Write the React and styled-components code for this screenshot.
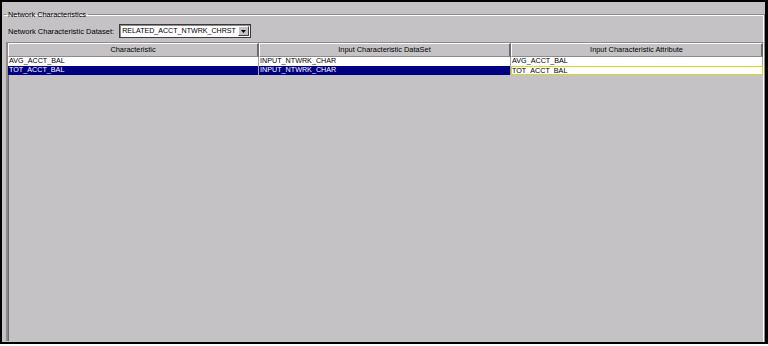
import React from "react";
import styled, { createGlobalStyle } from "styled-components";

const Global = createGlobalStyle`
  html, body { margin: 0; padding: 0; background: #ffffff; }
  body { font-family: "Liberation Sans", Arial, sans-serif; }
  * { box-sizing: border-box; }
`;

const Screen = styled.div`
  width: 768px;
  height: 346px;
  background: #ffffff;
  overflow: hidden;
`;

const Window = styled.div`
  width: 768px;
  height: 344px;
  background: #c4c2c4;
  border-top: 2px solid #000;
  border-left: 2px solid #000;
  border-right: 3px solid #000;
  border-bottom: 2px solid #000;
  padding: 2px 1px 0 2px;
  display: flex;
  flex-direction: column;
`;

const Group = styled.fieldset`
  flex: 1;
  margin: 0;
  padding: 0 0 1px 2px;
  border: none;
  border-top: 1px solid #8c8a8c;
  border-right: 1px solid #8c8a8c;
  box-shadow: inset 0 1px 0 #ffffff, inset -1px 0 0 #ffffff;
  display: flex;
  flex-direction: column;
  min-height: 0;
  margin-top: 6px;
`;

const Legend = styled.legend`
  font-size: 7.4px;
  line-height: 9px;
  color: #000;
  padding: 0 2px 0 2px;
  margin-left: 0;
`;

const DatasetRow = styled.div`
  display: flex;
  align-items: center;
  gap: 5px;
  height: 14px;
  margin-top: 5px;
  padding-left: 2px;
`;

const Label = styled.span`
  font-size: 7.55px;
  color: #000;
  white-space: nowrap;
`;

const Combo = styled.div`
  width: 132px;
  height: 14px;
  background: #ffffff;
  border: 1px solid #3a3a3a;
  box-shadow: inset 1px 1px 0 #8c8a8c;
  display: flex;
  align-items: center;
  justify-content: space-between;
  padding: 0 1px 0 2px;
`;

const ComboText = styled.span`
  font-size: 7.1px;
  color: #000;
  white-space: nowrap;
`;

const ComboButton = styled.div`
  width: 11px;
  height: 10px;
  background: #c4c2c4;
  border-top: 1px solid #ffffff;
  border-left: 1px solid #ffffff;
  border-right: 1px solid #404040;
  border-bottom: 1px solid #404040;
  display: flex;
  align-items: center;
  justify-content: center;
`;

const ScrollPane = styled.div`
  flex: 1;
  margin-top: 4px;
  border-left: 2px solid #8c8a8c;
  border-top: 1px solid #8c8a8c;
  border-right: 1px solid #ffffff;
  box-shadow: inset 1px 0 0 #6c6a6c;
  background: #c4c2c4;
  display: flex;
  flex-direction: column;
`;

const Grid = styled.div`
  display: grid;
  grid-template-columns: 251px 252px 252px;
`;

const HeaderCell = styled.div`
  height: 14px;
  font-size: 7.4px;
  line-height: 12px;
  text-align: center;
  color: #000;
  background: #c4c2c4;
  border-top: 1px solid #ffffff;
  border-left: 1px solid #ffffff;
  border-right: 2px solid #6c6a6c;
  border-bottom: 1px solid #8c8a8c;
  white-space: nowrap;
`;

const Cell = styled.div`
  height: 9px;
  font-size: 7.2px;
  padding-left: ${(p) => (p.$focused ? "0px" : "1px")};
  white-space: nowrap;
  overflow: hidden;
  color: ${(p) => (p.$selected && !p.$focused ? "#ffffff" : "#000000")};
  background: ${(p) => (p.$selected && !p.$focused ? "#000080" : "#ffffff")};
  border-right: ${(p) => (p.$focused ? "none" : "1px solid #a4a2a4")};
  border: ${(p) => (p.$focused ? "1px solid #d8d820" : undefined)};
  line-height: ${(p) => (p.$focused ? "7px" : "8px")};
`;

const Arrow = () => (
  <svg width="5" height="3" viewBox="0 0 5 3">
    <path d="M0 0 H5 L2.5 3 Z" fill="#000" />
  </svg>
);

const rows = [
  ["AVG_ACCT_BAL", "INPUT_NTWRK_CHAR", "AVG_ACCT_BAL", false],
  ["TOT_ACCT_BAL", "INPUT_NTWRK_CHAR", "TOT_ACCT_BAL", true],
];

export default function App() {
  return (
    <Screen>
      <Global />
      <Window>
        <Group>
          <Legend>Network Characteristics</Legend>
          <DatasetRow>
            <Label>Network Characteristic Dataset:</Label>
            <Combo>
              <ComboText>RELATED_ACCT_NTWRK_CHRST</ComboText>
              <ComboButton>
                <Arrow />
              </ComboButton>
            </Combo>
          </DatasetRow>
          <ScrollPane>
            <Grid>
              <HeaderCell>Characteristic</HeaderCell>
              <HeaderCell>Input Characteristic DataSet</HeaderCell>
              <HeaderCell>Input Characteristic Attribute</HeaderCell>
              {rows.map(([a, b, c, sel]) => (
                <React.Fragment key={a}>
                  <Cell $selected={sel}>{a}</Cell>
                  <Cell $selected={sel}>{b}</Cell>
                  <Cell $selected={sel} $focused={sel}>{c}</Cell>
                </React.Fragment>
              ))}
            </Grid>
          </ScrollPane>
        </Group>
      </Window>
    </Screen>
  );
}
